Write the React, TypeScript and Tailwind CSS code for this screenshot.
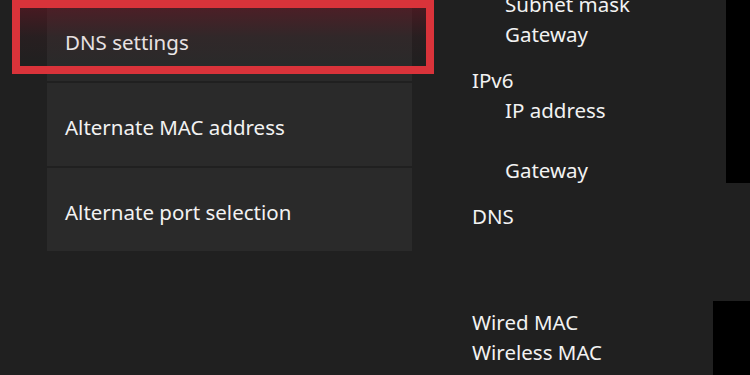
import React from "react";

const tiles = ["DNS settings", "Alternate MAC address", "Alternate port selection"];

type Line = { text: string; indent?: boolean };
const groups: Line[][] = [
  [
    { text: "Subnet mask", indent: true },
    { text: "Gateway", indent: true },
  ],
  [
    { text: "IPv6" },
    { text: "IP address", indent: true },
    { text: "" },
    { text: "Gateway", indent: true },
  ],
  [{ text: "DNS" }, { text: "" }, { text: "" }],
  [{ text: "Wired MAC" }, { text: "Wireless MAC" }],
];

export default function App() {
  return (
    <div
      className="relative w-[750px] h-[375px] overflow-hidden bg-[#202020] text-[#f2f2f2]"
      style={{ fontFamily: '"Noto Sans", "Open Sans", sans-serif' }}
    >
      <div className="flex">
        <div className="ml-[47px] mt-[-2px] w-[365px] flex flex-col gap-[2px]">
          {tiles.map((t) => (
            <div key={t} className="h-[83px] bg-[#2a2a2a] flex items-center pl-[18px] pt-[5px] text-[20.5px]">
              {t}
            </div>
          ))}
        </div>
        <div className="ml-[60px] mt-[-11px] flex flex-col gap-[16px] text-[20.5px] leading-[30px]">
          {groups.map((g, i) => (
            <div key={i} className="flex flex-col">
              {g.map((l, j) => (
                <div key={j} className={`h-[30px] whitespace-nowrap ${l.indent ? "pl-[33px]" : ""}`}>
                  {l.text}
                </div>
              ))}
            </div>
          ))}
        </div>
      </div>

      {/* highlight box */}
      <div className="absolute left-[12px] top-0 w-[422px] h-[74px] border-[8px] border-[#d9333a]">
        <div className="w-full h-full bg-gradient-to-b from-[#6e1423]/50 via-[#6e1423]/10 to-transparent" />
      </div>

      {/* black frame edges */}
      <div className="absolute left-[726px] top-0 w-[24px] h-[183px] bg-black" />
      <div className="absolute left-[713px] top-[301px] w-[37px] h-[74px] bg-black" />
    </div>
  );
}
